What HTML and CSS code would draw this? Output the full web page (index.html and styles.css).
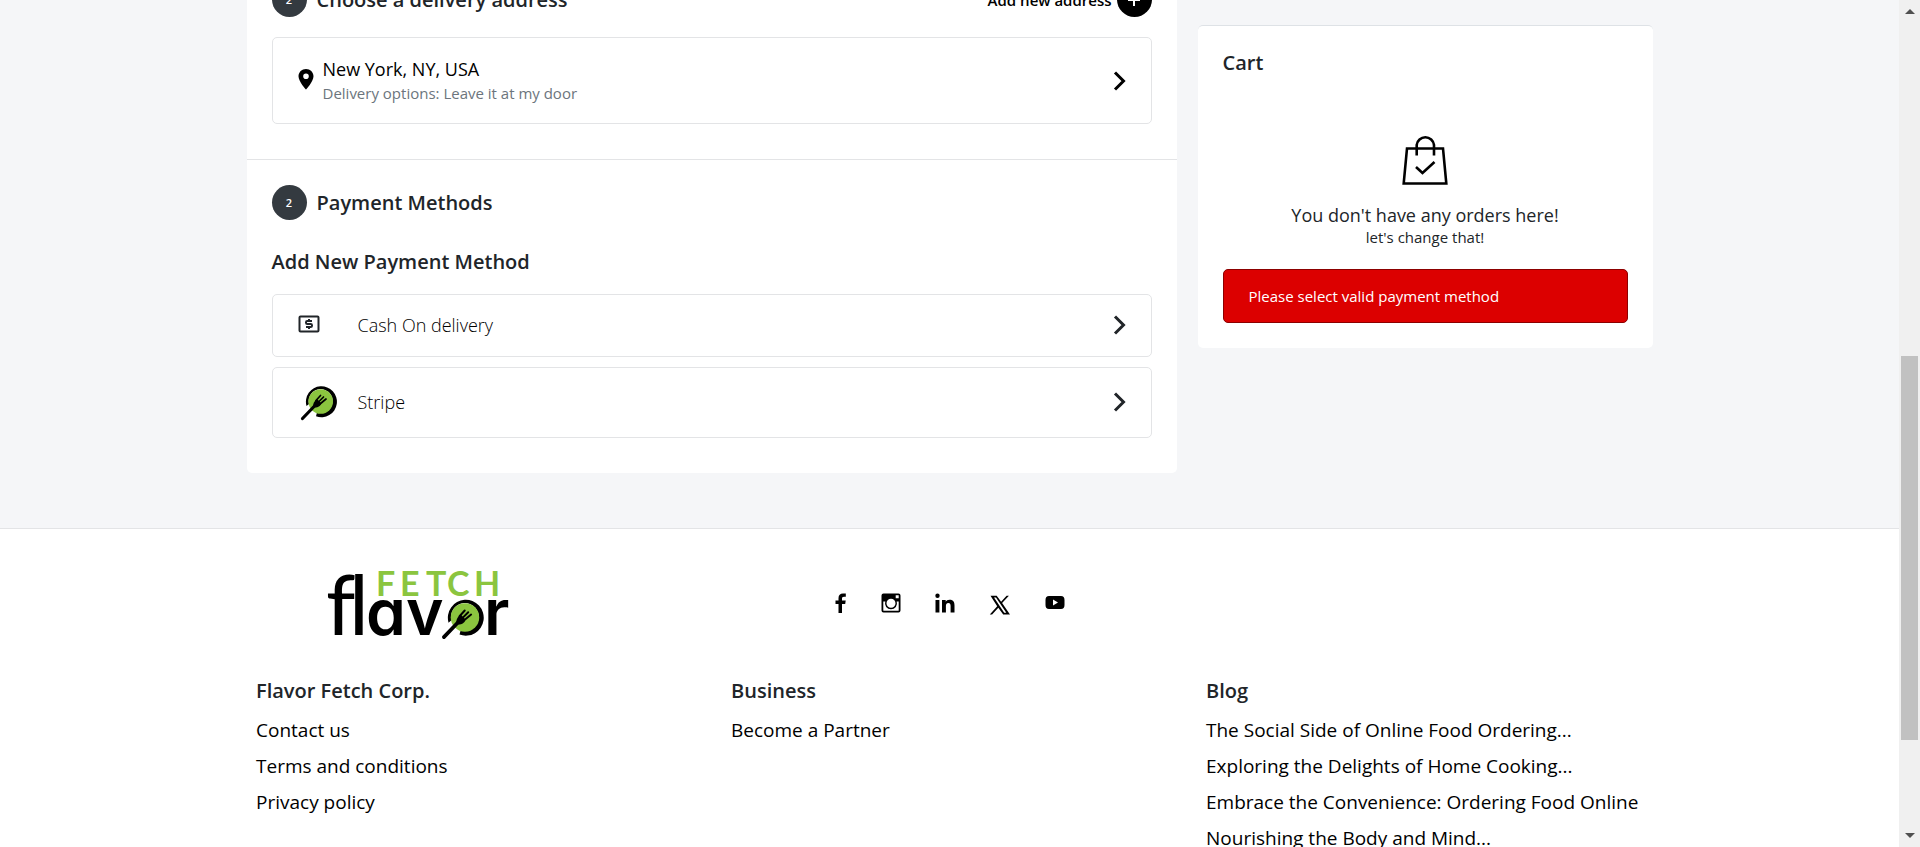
FILE: index.html
```html
<!DOCTYPE html>
<html lang="en">
<head>
<meta charset="utf-8">
<title>Checkout - Flavor Fetch</title>
<link rel="stylesheet" href="styles.css">
</head>
<body>
<svg class="defs" aria-hidden="true">
  <symbol id="chevron" viewBox="0 0 14 22"><path d="M2 2.500 L10.500 11 L2 19.500" fill="none" stroke="currentColor" stroke-width="3"/></symbol>
  <symbol id="plate" viewBox="0 0 38 38">
    <path d="M6.500 23 A15.500 15.500 0 1 1 16 33.300 L17 29.500 A12 12 0 1 0 9 21 Z" fill="#000"/>
    <circle cx="20.700" cy="18.500" r="12.300" fill="#8bc53f"/>
    <path d="M2.500 35.500 L15 22.500" stroke="#000" stroke-width="3.200" stroke-linecap="round"/>
    <path d="M13 24.500 C13 20 14.500 18 17 16 L21 20 C21 23 18 25 13 24.500 Z" fill="#000"/>
    <path d="M16 17.500 L20.500 12.500 M18 19.500 L23.500 14 M20 21 L26 16" stroke="#000" stroke-width="1.700" stroke-linecap="round"/>
  </symbol>
</svg>
<div class="viewport">
  <div class="page">
    <main class="checkout">
      <div class="panel steps">
        <section class="step">
          <header class="step-head">
            <span class="step-number">2</span>
            <h2>Choose a delivery address</h2>
            <button class="add-address" type="button">Add new address
              <span class="plus"><svg viewBox="0 0 14 14" width="14" height="14"><path d="M7 1V13M1 7H13" stroke="currentColor" stroke-width="2"/></svg></span>
            </button>
          </header>
          <button class="option address" type="button">
            <svg class="pin" viewBox="0 0 16 26" width="16" height="26"><path fill="currentColor" fill-rule="evenodd" d="M8 1C3.800 1 .5 4.200 .5 8.200C.5 13.500 8 21.500 8 21.500S15.500 13.500 15.500 8.200C15.500 4.200 12.200 1 8 1ZM8 11A2.800 2.800 0 1 1 8 5.400A2.800 2.800 0 0 1 8 11Z"/></svg>
            <span class="address-text"><strong>New York, NY, USA</strong><small>Delivery options: Leave it at my door</small></span>
            <svg class="chevron" width="14" height="22"><use href="#chevron"/></svg>
          </button>
        </section>
        <section class="step payment">
          <header class="step-head">
            <span class="step-number">2</span>
            <h2>Payment Methods</h2>
          </header>
          <h3>Add New Payment Method</h3>
          <button class="option cash" type="button">
            <span class="method-icon"><svg viewBox="0 0 22 20" width="22" height="20"><rect x="1.500" y="1.500" width="19" height="15" rx="1" fill="none" stroke="currentColor" stroke-width="2"/><path d="M14 5.900H9.300A1.300 1.300 0 0 0 8 7.200V7.700A1.300 1.300 0 0 0 9.300 9H12.700A1.300 1.300 0 0 1 14 10.300V10.800A1.300 1.300 0 0 1 12.700 12.100H8M11 4V6M11 12V14" fill="none" stroke="currentColor" stroke-width="2"/></svg></span>
            <span class="method-name">Cash On delivery</span>
            <svg class="chevron" width="14" height="22"><use href="#chevron"/></svg>
          </button>
          <button class="option stripe" type="button">
            <span class="method-icon stripe-icon"><svg width="38" height="38"><use href="#plate"/></svg></span>
            <span class="method-name">Stripe</span>
            <svg class="chevron" width="14" height="22"><use href="#chevron"/></svg>
          </button>
        </section>
      </div>
      <aside class="panel cart">
        <h2>Cart</h2>
        <div class="empty">
          <svg viewBox="0 0 46 50" width="46" height="50" fill="none" stroke="#000" stroke-width="2.600"><path d="M5 13.500H41L44.300 48.500H1.700Z"/><path d="M14.700 20.500V10A8.700 8.700 0 0 1 32 10V20.500"/><path d="M14 32L20.500 38L32.500 27"/></svg>
          <strong>You don't have any orders here!</strong>
          <span>let's change that!</span>
        </div>
        <div class="alert" role="alert">Please select valid payment method</div>
      </aside>
    </main>
    <footer class="footer">
      <div class="footer-grid">
        <a class="logo" href="#" aria-label="Flavor Fetch">
          <svg viewBox="0 0 184 74" width="184" height="74">
            <text class="logo-top" x="49 73 99 120 147" y="27">FETCH</text>
            <text class="logo-tall" x="-1 22" y="66">fl</text>
            <text class="logo-main" x="39" y="66">av</text>
            <svg x="114" y="27" width="44" height="44"><use href="#plate"/></svg>
            <text class="logo-main" x="157" y="66">r</text>
          </svg>
        </a>
        <nav class="social" aria-label="Social">
          <a href="#" aria-label="Facebook"><svg viewBox="0 0 12 20" width="12" height="20"><path d="M3.500 20V11H.5V7.500H3.500V5C3.500 2 5.200.5 8 .5H10.800V3.800H9C7.500 3.800 7 4.500 7 5.600V7.500H10.700L10.200 11H7V20Z"/></svg></a>
          <a href="#" aria-label="Instagram"><svg viewBox="0 0 20 20" width="20" height="20"><path fill-rule="evenodd" d="M2.500 .5H17.500A2 2 0 0 1 19.500 2.500V17.500A2 2 0 0 1 17.500 19.500H2.500A2 2 0 0 1 .5 17.500V2.500A2 2 0 0 1 2.500 .5ZM14.700 2.300V5.300H17.700V2.300ZM2.300 8.500V17.200Q2.300 17.700 2.800 17.700H17.200Q17.700 17.700 17.700 17.200V8.500H15.700A6 6 0 1 1 4.300 8.500ZM10 5.700A4.500 4.500 0 1 0 10 14.700A4.500 4.500 0 1 0 10 5.700Z"/></svg></a>
          <a href="#" aria-label="LinkedIn"><svg viewBox="0 0 20 20" width="20" height="20"><path d="M.5 7H4.400V19.500H.5ZM2.500 .5A2.200 2.200 0 1 1 2.500 4.900A2.200 2.200 0 0 1 2.500 .5ZM7 7H10.700V8.700C11.300 7.600 12.600 6.700 14.500 6.700C18.700 6.700 19.500 9.200 19.500 12.500V19.500H15.600V13.200C15.600 11.500 15.300 10 13.300 10C11.300 10 10.900 11.500 10.900 13.200V19.500H7Z"/></svg></a>
          <a class="x-link" href="#" aria-label="X"><svg viewBox="0 0 22 20" width="22" height="20"><path fill-rule="evenodd" d="M1.500 .7H7.700L12.100 6.700L17.600 .7H19.900L13.100 8.100L21 19.500H14.200L9.300 12.700L3.100 19.500H.8L8.200 11.300ZM5 2.400L15.200 17.800H17.300L7 2.400Z"/></svg></a>
          <a href="#" aria-label="YouTube"><svg viewBox="0 0 20 20" width="20" height="20"><path fill-rule="evenodd" d="M4 3H16Q19.500 3 19.500 7V12Q19.500 16 16 16H4Q.5 16 .5 12V7Q.5 3 4 3ZM8 6.500V12.500L13 9.500Z"/></svg></a>
        </nav>
        <div></div>
        <section><h4>Flavor Fetch Corp.</h4><ul>
          <li><a href="#">Contact us</a></li><li><a href="#">Terms and conditions</a></li><li><a href="#">Privacy policy</a></li></ul></section>
        <section><h4>Business</h4><ul><li><a href="#">Become a Partner</a></li></ul></section>
        <section><h4>Blog</h4><ul>
          <li><a href="#">The Social Side of Online Food Ordering...</a></li>
          <li><a href="#">Exploring the Delights of Home Cooking...</a></li>
          <li><a href="#">Embrace the Convenience: Ordering Food Online</a></li>
          <li><a href="#">Nourishing the Body and Mind...</a></li></ul></section>
      </div>
    </footer>
  </div>
  <div class="scrollbar" aria-hidden="true">
    <svg viewBox="0 0 10 5" width="10" height="5"><path d="M0 5L5 0L10 5Z"/></svg>
    <div class="track"><div class="thumb"></div></div>
    <svg viewBox="0 0 10 5" width="10" height="5"><path d="M0 0L5 5L10 0Z"/></svg>
  </div>
</div>
</body>
</html>
```
FILE: styles.css
```css
* { box-sizing: border-box; }
body { margin: 0; background: #f5f6f8; color: #212529; font-family: "Open Sans", "Noto Sans", sans-serif; font-size: 18px; }
h2, h3, h4, ul { margin: 0; padding: 0; }
h2, h3, h4 { font-size: 20px; line-height: 30px; font-weight: 600; }
button { font: inherit; color: inherit; background: none; border: 0; padding: 0; text-align: left; cursor: pointer; }
a { color: #000; text-decoration: none; }
svg { display: block; flex: none; }
.defs { position: absolute; width: 0; height: 0; }
.viewport { display: grid; grid-template-columns: 1fr 21px; height: 100vh; overflow: hidden; }
.page { min-width: 0; height: 100vh; overflow: hidden; }

.checkout { display: grid; grid-template-columns: 930fr 455fr; gap: 21px; align-items: start; max-width: 1406px; margin: 0 auto; padding-bottom: 55px; }
.panel { background: #fff; border-radius: 5px; }
/* The page is scrolled part-way through the address heading. */
.steps { margin-top: -43px; }
.step { padding: 25px 25px 35px; }
.step + .step { border-top: 1px solid #e3e4e6; }
.step-head { display: flex; align-items: center; gap: 10px; margin-bottom: 20px; }
.payment .step-head { margin-bottom: 27px; }
.step-number { display: grid; place-items: center; width: 35px; height: 35px; border-radius: 50%; background: #343a40; color: #fff; font-size: 11px; font-weight: 600; }
.add-address { display: flex; align-items: center; gap: 5px; margin-left: auto; color: #000; font-size: 15px; font-weight: 600; }
.plus { display: grid; place-items: center; width: 35px; height: 35px; border-radius: 50%; background: #000; color: #fff; }
.option { display: flex; align-items: center; width: 100%; padding: 0 24px 0 25px; border: 1px solid #e3e4e6; border-radius: 5px; }
.chevron { margin-left: auto; }
.address { min-height: 87px; color: #000; }
.pin { margin-right: 9px; }
.address-text { display: flex; flex-direction: column; }
.address-text strong { font-size: 18px; line-height: 24px; font-weight: 500; }
.address-text small { font-size: 15px; line-height: 24px; color: #6c757d; }
.payment h3 { margin-bottom: 17px; }
.payment .option { padding-bottom: 2px; }
.cash { min-height: 63px; }
.stripe { min-height: 71px; margin-top: 10px; }
.method-icon { width: 60px; }
.stripe-icon { padding-left: 2px; }
.method-name { color: #000; font-size: 18px; font-weight: 300; }

.cart { margin-top: 25px; padding: 22px 25px 25px; border-top: 1px solid #dee2e6; }
.empty { display: flex; flex-direction: column; align-items: center; padding: 57px 0 22px; }
.empty strong { margin-top: 18px; font-size: 18px; line-height: 25px; font-weight: 500; }
.empty span { font-size: 15px; line-height: 19px; }
.alert { padding: 14px 25px; border: 1px solid #8c0000; border-radius: 5px; background: #dc0000; color: #fff; font-size: 15px; line-height: 24px; font-weight: 500; }

.footer { background: #fff; border-top: 1px solid #e3e4e6; min-height: 400px; padding-top: 40px; }
.footer-grid { display: grid; grid-template-columns: repeat(3, 1fr); row-gap: 33px; max-width: 1425px; margin: 0 auto; }
.footer-grid > section { padding-left: 19px; }
.logo { margin-left: 90px; }
.logo-top { font: 700 34px Lato, sans-serif; fill: #8bc53f; }
.logo-tall { font: 400 84px Lato, sans-serif; }
.logo-main { font: 600 64px Inter, sans-serif; font-feature-settings: "cv11"; }
.social { display: flex; justify-content: center; align-items: center; gap: 34px; padding-bottom: 6px; }
.x-link { padding-top: 3px; }
.footer h4 { margin-bottom: 6px; }
.footer ul { list-style: none; }
.footer li { font-size: 19px; line-height: 36px; }

.scrollbar { display: flex; flex-direction: column; align-items: center; padding: 9px 2px; background: #f0f0f0; fill: #505050; }
.track { flex: 1; width: 100%; padding: 342px 0 93px; }
.thumb { height: 100%; background: #c1c1c1; }
```
